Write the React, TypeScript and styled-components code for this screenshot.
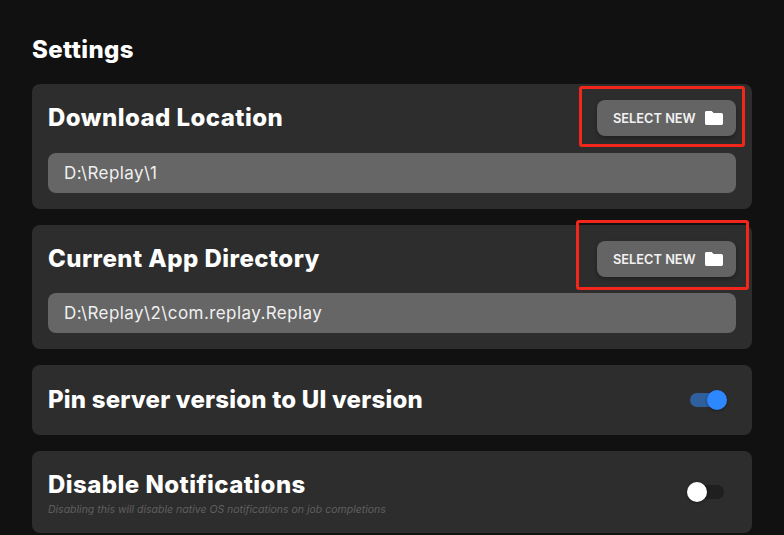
import React from 'react';
import styled, { createGlobalStyle } from 'styled-components';

const GlobalStyle = createGlobalStyle`
  html, body {
    margin: 0;
    padding: 0;
    height: 100%;
    overflow: hidden;
    background: #111111;
  }
`;

const Page = styled.main`
  position: relative;
  box-sizing: border-box;
  width: 784px;
  height: 535px;
  overflow: hidden;
  padding: 36px 32px 0;
  background: #111111;
  color: #ffffff;
  font-family: Inter, 'Liberation Sans', sans-serif;
`;

const Title = styled.h1`
  margin: 0 0 20px;
  height: 28px;
  font-size: 24px;
  line-height: 27px;
  font-weight: 800;
  letter-spacing: 0.4px;
`;

const Stack = styled.div`
  display: flex;
  flex-direction: column;
  gap: 16px;
`;

const Card = styled.section<{ $height: number }>`
  box-sizing: border-box;
  height: ${(p) => p.$height}px;
  padding: 0 16px;
  border-radius: 8px;
  background: #2d2d2d;
  display: flex;
  flex-direction: column;
  justify-content: center;
`;

const Row = styled.div`
  display: flex;
  align-items: center;
  justify-content: space-between;
`;

const Heading = styled.h2<{ $tight?: boolean }>`
  margin: 0;
  font-size: 24px;
  line-height: 32px;
  font-weight: 800;
  letter-spacing: ${(p) => (p.$tight ? 0.2 : 0.45)}px;
`;

const Hint = styled.p`
  margin: 2px 0 0;
  font-size: 10.5px;
  line-height: 14px;
  font-style: italic;
  color: #5f5f5f;
`;

const NotificationText = styled.div`
  margin-top: 1px;
`;

const SelectButton = styled.button`
  display: flex;
  align-items: center;
  justify-content: space-between;
  box-sizing: border-box;
  width: 139px;
  height: 36px;
  padding: 0 13px 0 16px;
  border: 0;
  border-radius: 8px;
  background: #646464;
  box-shadow: 0 2px 4px rgba(0, 0, 0, 0.3);
  color: #f2f2f2;
  font-family: inherit;
  font-size: 12.8px;
  font-weight: 600;
`;

const PathField = styled.div<{ $gap: number }>`
  box-sizing: border-box;
  height: 40px;
  margin-top: ${(p) => p.$gap}px;
  padding: 0 16px;
  border-radius: 8px;
  background: #666666;
  color: #f0f0f0;
  font-size: 17px;
  line-height: 40px;
  letter-spacing: 0.42px;
`;

const Track = styled.div<{ $on: boolean }>`
  position: relative;
  width: 34px;
  height: 14px;
  margin-right: 12px;
  border-radius: 7px;
  background: ${(p) => (p.$on ? '#2f5f9d' : '#1f1f1f')};
`;

const Thumb = styled.div<{ $on: boolean }>`
  position: absolute;
  top: -3px;
  ${(p) => (p.$on ? 'right: -3px;' : 'left: -3px;')}
  width: 20px;
  height: 20px;
  border-radius: 50%;
  background: ${(p) => (p.$on ? '#2d88ff' : '#ffffff')};
  box-shadow: 0 1px 3px rgba(0, 0, 0, 0.4);
`;

// red boxes drawn over the screenshot by whoever annotated it
const Annotation = styled.div<{ $x: number; $y: number; $w: number; $h: number }>`
  position: absolute;
  box-sizing: border-box;
  left: ${(p) => p.$x}px;
  top: ${(p) => p.$y}px;
  width: ${(p) => p.$w}px;
  height: ${(p) => p.$h}px;
  border: 3px solid #f3261b;
  border-radius: 3px;
`;

const FolderIcon = () => (
  <svg width="18" height="14" viewBox="0 0 18 14" fill="#ffffff">
    <path d="M1.5 0H6.6L8.6 2H16.2C17.2 2 18 2.8 18 3.8V12.2C18 13.2 17.2 14 16.2 14H1.8C.8 14 0 13.2 0 12.2V1.5C0 .7.7 0 1.5 0Z" />
  </svg>
);

const Toggle = ({ on }: { on: boolean }) => (
  <Track $on={on}>
    <Thumb $on={on} />
  </Track>
);

const directories: [string, string, number, number][] = [
  ['Download Location', 'D:\\Replay\\1', 125, 17],
  ['Current App Directory', 'D:\\Replay\\2\\com.replay.Replay', 124, 16],
];

export default function App(): JSX.Element {
  return (
    <Page>
      <GlobalStyle />
      <Title>Settings</Title>
      <Stack>
        {directories.map(([label, path, height, gap]) => (
          <Card key={label} $height={height}>
            <Row>
              <Heading>{label}</Heading>
              <SelectButton>
                SELECT NEW
                <FolderIcon />
              </SelectButton>
            </Row>
            <PathField $gap={gap}>{path}</PathField>
          </Card>
        ))}
        <Card $height={70}>
          <Row>
            <Heading $tight>Pin server version to UI version</Heading>
            <Toggle on />
          </Row>
        </Card>
        <Card $height={82}>
          <Row>
            <NotificationText>
              <Heading>Disable Notifications</Heading>
              <Hint>Disabling this will disable native OS notifications on job completions</Hint>
            </NotificationText>
            <Toggle on={false} />
          </Row>
        </Card>
      </Stack>
      <Annotation $x={579} $y={86} $w={166} $h={61} />
      <Annotation $x={576} $y={220} $w={173} $h={70} />
    </Page>
  );
}
